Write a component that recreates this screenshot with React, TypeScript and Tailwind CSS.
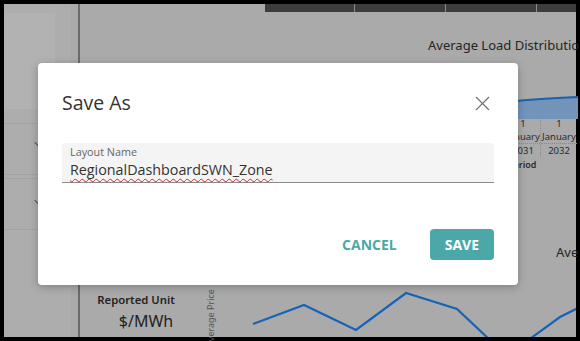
import React from "react";
import { X } from "lucide-react";

const linePoints = "173,320 224,301 276,326 326,289 377,305 411,337 447,337 480,313 500,303";

const SaveAsDialog = () => (
  <div
    className="absolute left-[38px] top-[63px] w-[480px] h-[222px] bg-white rounded-[4px] shadow-[0_2px_8px_rgba(0,0,0,0.25)] px-[24px] pt-[26px] pb-[25px] flex flex-col"
    style={{ fontFamily: '"Open Sans", sans-serif' }}
  >
    <div className="flex items-center justify-between h-[28px]">
      <h2 className="text-[19.5px] leading-[28px] text-[#333333] font-normal">Save As</h2>
      <button className="w-[24px] h-[24px] flex items-center justify-center text-[#707070]">
        <X className="w-[25px] h-[25px] shrink-0" strokeWidth={1.1} />
      </button>
    </div>
    <div className="mt-[26px] h-[40px] bg-[#f4f4f4] rounded-t-[4px] border-b border-[#8c8c8c] px-[8px] pt-[1px] flex flex-col">
      <span className="text-[10.8px] leading-[15px] text-[#666666]">Layout Name</span>
      <span className="text-[14.3px] leading-[21px] text-[#333333] self-start underline decoration-wavy decoration-[#e02020] decoration-1 underline-offset-[3px]">
        RegionalDashboardSWN_Zone
      </span>
    </div>
    <div className="mt-auto flex items-center justify-end gap-[33px]">
      <button className="text-[14px] font-bold text-[#4aa8a9]">CANCEL</button>
      <button className="h-[31px] px-[15px] rounded-[4px] bg-[#4aa8a9] text-white text-[14px] font-bold">
        SAVE
      </button>
    </div>
  </div>
);

const App = () => {
  return (
    <div className="relative w-[580px] h-[341px] bg-black pt-[4px] pl-[4px] pr-[4px] pb-[4px] overflow-hidden">
      <div className="flex h-full bg-[#aaaaaa]">
        {/* left filter panel */}
        <div className="w-[67px] flex flex-col bg-[#adadad]">
          <div className="mt-[9px] w-[51px] h-[96px] bg-[#b2b2b2]" />
          <div className="mt-[14px] h-[52px] border-t border-b border-[#a2a2a2] relative">
            <span className="absolute left-[29px] top-[22px] w-[12px] h-[1px] bg-[#444444] rotate-45" />
          </div>
          <div className="mt-[3px] h-[52px] border-t border-b border-[#a2a2a2] relative">
            <span className="absolute left-[29px] top-[25px] w-[12px] h-[1px] bg-[#444444] rotate-45" />
          </div>
        </div>
        <div className="w-[7px] bg-[#a9a9a9]" />
        <div className="w-[2px] bg-[#6b6b6b]" />
        {/* report canvas */}
        <div className="relative flex-1" style={{ fontFamily: '"Noto Sans", "Open Sans", sans-serif' }}>
          <div className="ml-[185px] h-[8px] flex bg-[#3d3d3d]">
            <div className="w-[89px]" />
            <div className="w-[91px] border-l border-[#8a8a8a]" />
            <div className="w-[91px] border-l border-[#8a8a8a]" />
            <div className="flex-1 border-l border-[#8a8a8a]" />
          </div>

          <div className="absolute left-[128px] top-[56px] text-[13px] leading-[16px] text-[#222222] flex items-center gap-[6px]">
            <span>Demand</span>
            <span className="w-[7px] h-[7px] rounded-full bg-[#1a5fb0]" />
            <span>Load</span>
          </div>

          <div className="absolute left-[348px] top-[32px] text-[13px] leading-[18px] text-[#252525] whitespace-nowrap">
            Average Load Distribution
          </div>

          {/* load distribution chart */}
          <div className="absolute left-[426px] top-[86px] w-[72px]">
            <svg width="72" height="29" className="block">
              <path d="M0 12 C20 10 40 8 72 7 L72 29 L0 29 Z" fill="#7294bb" />
              <path d="M0 12 C20 10 40 8 72 7" stroke="#1a5fb0" strokeWidth="2" fill="none" />
            </svg>
            <div className="flex text-[9.5px] leading-[13px] text-[#2a2a2a] -mt-[2px]">
              <div className="w-[35px] text-center border-r border-dotted border-[#888888]">
                <div>1</div>
                <div className="border-b border-dotted border-[#888888]">January</div>
                <div>2031</div>
              </div>
              <div className="w-[36px] text-center">
                <div>1</div>
                <div className="border-b border-dotted border-[#888888]">January</div>
                <div>2032</div>
              </div>
            </div>
            <div className="text-[9px] leading-[12px] text-[#2a2a2a] font-semibold mt-[2px] ml-[2px]">Period</div>
          </div>

          <div className="absolute left-[476px] top-[239px] text-[13px] leading-[18px] text-[#252525]">Ave</div>

          {/* reported unit card */}
          <div className="absolute left-[19px] top-[287px] flex flex-col items-center w-[74px]">
            <span className="text-[11.3px] leading-[18px] text-[#222222] font-semibold whitespace-nowrap">Reported Unit</span>
            <span className="text-[16px] leading-[24px] text-[#222222] ml-[20px]">$/MWh</span>
          </div>

          <div className="absolute left-[102px] top-[309px] -rotate-90 origin-center text-[9px] leading-[10px] text-[#555555] whitespace-nowrap">
            Average Price
          </div>

          <svg className="absolute left-0 top-0 pointer-events-none" width="496" height="333">
            <polyline points={linePoints} fill="none" stroke="#1663b7" strokeWidth="2.2" />
          </svg>
        </div>
      </div>
      <SaveAsDialog />
    </div>
  );
};

export default App;
